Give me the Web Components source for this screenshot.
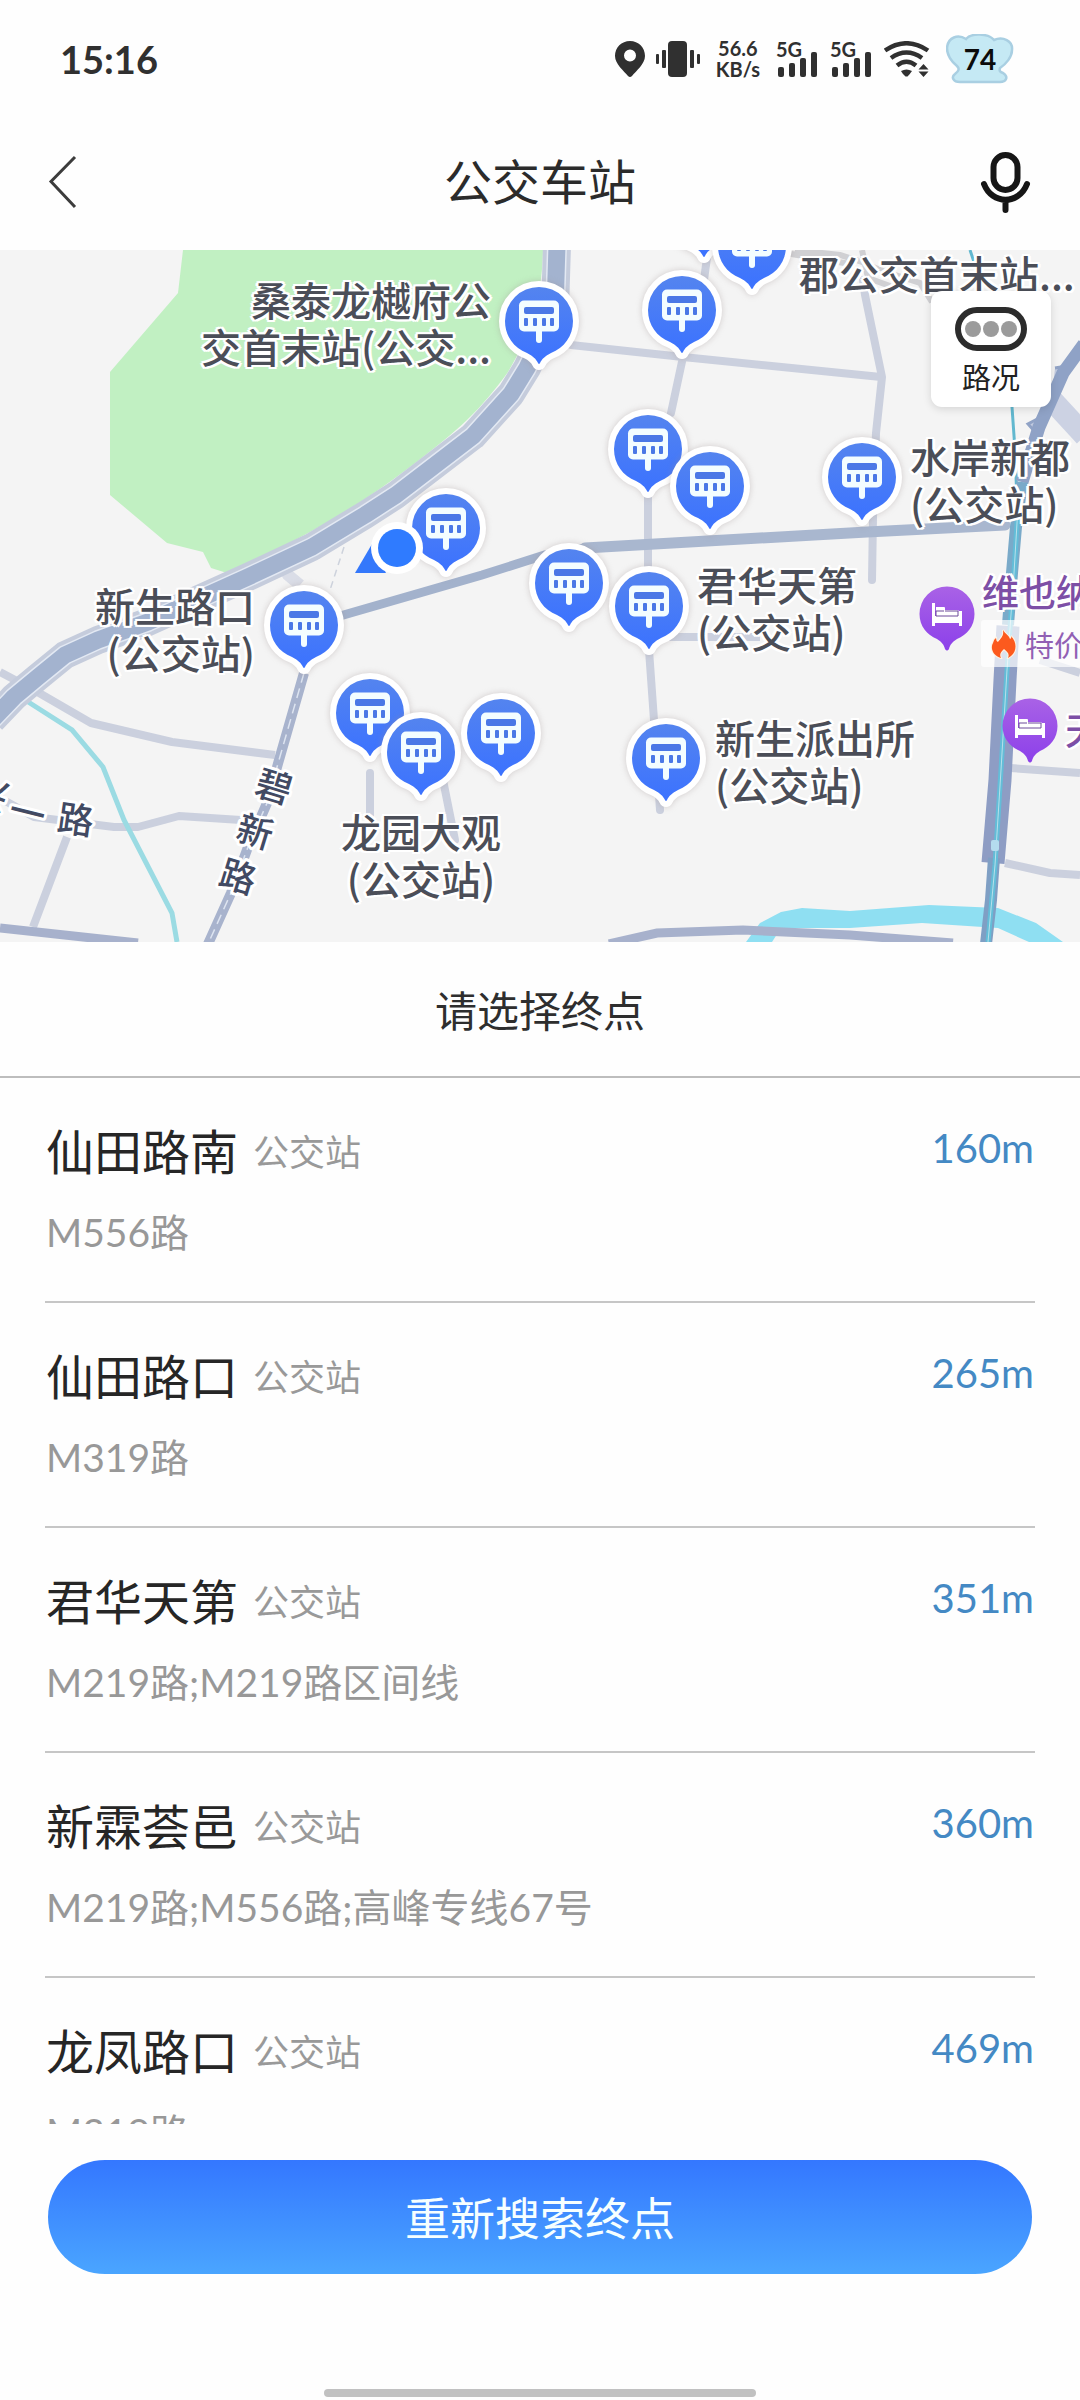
<!DOCTYPE html>
<html lang="zh-CN">
<head>
<meta charset="utf-8">
<meta name="viewport" content="width=device-width, initial-scale=1">
<title>公交车站</title>
<style>
body { margin: 0; background: #fefefe; color: #2b2b2b; font-family: Lato, "Noto Sans CJK SC", sans-serif; }
</style>
</head>
<body>
<station-page></station-page>

<script>
const define = (name, html, setup) => {
  const template = document.createElement('template');
  template.innerHTML = html.trim();
  customElements.define(name, class extends HTMLElement {
    constructor() {
      super();
      this.attachShadow({ mode: 'open' }).append(template.content.cloneNode(true));
    }
    connectedCallback() { if (setup) setup(this, this.shadowRoot); }
  });
};

/* Puts an element at its map coordinates */
const place = el => {
  el.style.left = el.getAttribute('x') + 'px';
  el.style.top = el.getAttribute('y') + 'px';
};

define('status-bar', `
<style>
:host { display: flex; align-items: center; justify-content: space-between; height: 117px; padding: 0 66px 0 60px; box-sizing: border-box; color: #303030; font-weight: 700; }
.time { font-size: 38px; line-height: 48px; }
.icons { display: flex; align-items: center; gap: 11px; }
svg { display: block; }
.rate { font-size: 20px; line-height: 21px; text-align: center; margin: 0 5px; }
.cell { position: relative; width: 43px; height: 36px; }
.cell span { position: absolute; left: 0; top: -2px; font-size: 20px; line-height: 20px; }
.cell svg { position: absolute; left: 0; top: 0; }
.battery { display: grid; place-items: center; margin-left: 5px; color: #0b0b0b; }
.battery > * { grid-area: 1 / 1; }
.battery span { font-size: 28px; line-height: 32px; }
</style>
<span class="time">15:16</span>
<div class="icons">
  <svg width="30" height="36" viewBox="0 0 30 36" fill="#303030"><path fill-rule="evenodd" d="M15 0C6.500 0 0 6.500 0 15c0 8 9 15 13 20q2 2 4 0c4-5 13-12 13-20C30 6.500 23.500 0 15 0Zm0 8.500a6 6 0 1 1 0 12 6 6 0 0 1 0-12Z"/></svg>
  <svg width="44" height="36" viewBox="0 0 44 36" fill="#303030"><rect x="12" width="19" height="36" rx="4"/><rect x="6" y="9" width="4" height="18" rx="1"/><rect y="13" width="3" height="10" rx="1"/><rect x="34" y="9" width="4" height="18" rx="1"/><rect x="41" y="13" width="3" height="10" rx="1"/></svg>
  <div class="rate">56.6<br>KB/s</div>
  <div class="cell"><span>5G</span><svg width="43" height="36" fill="#303030"><rect x="2" y="26" width="6" height="10" rx="2"/><rect x="13" y="22" width="6" height="14" rx="2"/><rect x="24" y="17" width="6" height="19" rx="2"/><rect x="35" y="11" width="6" height="25" rx="2"/></svg></div>
  <div class="cell"><span>5G</span><svg width="43" height="36" fill="#303030"><rect x="2" y="26" width="6" height="10" rx="2"/><rect x="13" y="22" width="6" height="14" rx="2"/><rect x="24" y="17" width="6" height="19" rx="2"/><rect x="35" y="11" width="6" height="25" rx="2"/></svg></div>
  <svg width="46" height="36" viewBox="0 0 46 36" fill="#303030"><g fill="none" stroke="#303030" stroke-width="4.500"><path d="M1 9.500Q22.500-5 44 9.500"/><path d="M7 17Q22.500 6 38 17"/><path d="M13 24.500Q22.500 17 32 24.500"/></g><path d="M17 30q5.500-3 11 0-2 3-4.500 5.500h-2Q18.500 33 17 30Z"/><path d="m39.500 23 5 5.500h-10ZM39.500 36l5-5.500h-10Z"/></svg>
  <div class="battery">
    <svg width="68" height="50" viewBox="0 0 68 50"><path d="M9 40C14 36 13 34 11 32 5 27 1 21 1 14 2 3 12 0 20 5 25-1 42-1 48 6 57 2 67 7 66 16 66 23 60 30 54 34 53 37 54 38 57 39 63 43 60 48 54 48H14C7 48 5 43 9 40Z" fill="#c5e9f4" stroke="#a9cfe2" stroke-width="2.500"/></svg>
    <span>74</span>
  </div>
</div>`);

define('title-bar', `
<style>
:host { display: flex; align-items: center; justify-content: space-between; height: 133px; padding: 0 48px 3px; box-sizing: border-box; }
h1 { margin: 0; font-size: 48px; line-height: 56px; font-weight: 400; }
button { padding: 0; border: 0; background: none; width: 54px; height: 64px; display: grid; place-items: center start; }
.mic { place-items: center end; }
svg { display: block; }
</style>
<button aria-label="返回"><svg width="30" height="54" viewBox="0 0 30 54" fill="none" stroke="#3c3c3c" stroke-width="3"><path d="M27 2 3 26.500 27 52"/></svg></button>
<h1><slot></slot></h1>
<button class="mic" aria-label="语音"><svg width="52" height="62" viewBox="0 0 52 62" fill="none" stroke="#161616" stroke-width="6" stroke-linecap="round"><rect x="13.500" y="4" width="24" height="35" rx="12"/><path d="M4 33C12 54 39 54 47 33M25.500 49v10"/></svg></button>`);

define('bus-pin', `
<style>
:host { position: absolute; width: 88px; height: 98px; margin: -44px 0 0 -44px; }
svg { display: block; filter: drop-shadow(0 0 3px #9a8f8f66); }
</style>
<svg width="88" height="98" viewBox="-44 -44 88 98">
  <defs><linearGradient id="g" x1="0" y1="0" x2="0" y2="1"><stop stop-color="#5484ef"/><stop offset="1" stop-color="#3b72ff"/></linearGradient></defs>
  <path d="M0-34A34 34 0 0 0-34 0C-34 15-25 27-12 32-6 35-3 38-1 42Q0 44 1 42C3 38 6 35 12 32 25 27 34 15 34 0A34 34 0 0 0 0-34Z" fill="url(#g)" stroke="#fff" stroke-width="12" stroke-linejoin="round" paint-order="stroke"/>
  <rect x="-20" y="-20.500" width="40" height="31" rx="5" fill="#f3fdff"/>
  <rect x="-3" y="6" width="6" height="16" rx="3" fill="#f3fdff"/>
  <g fill="#4a78e6"><rect x="-15" y="-14" width="30" height="7" rx="2"/><rect x="-15" y="-3" width="4" height="8" rx="1"/><rect x="-6" y="-3" width="4" height="8" rx="1"/><rect x="3" y="-3" width="4" height="8" rx="1"/><rect x="11" y="-3" width="4" height="8" rx="1"/></g>
</svg>`, place);

define('hotel-pin', `
<style>
:host { position: absolute; width: 56px; height: 66px; margin: -28px 0 0 -28px; }
svg { display: block; }
</style>
<svg width="56" height="66" viewBox="-28 -28 56 66">
  <defs><linearGradient id="g" x1="0" y1="0" x2="0" y2="1"><stop stop-color="#a962e6"/><stop offset="1" stop-color="#8c40ea"/></linearGradient></defs>
  <path d="M0-27.500A27.500 27.500 0 0 0-27.500 0C-27.500 12-20 21-10 25-5 28-3 31-2 35Q0 38 2 35C3 31 5 28 10 25 20 21 27.500 12 27.500 0A27.500 27.500 0 0 0 0-27.500Z" fill="url(#g)"/>
  <path d="M-15-11h3V2h24V-3h3v15h-3V9h-24v3h-3Z" fill="#fff"/><path d="M-11-7h8q1 0 1 1v2h12q2 0 2 2v4h-23Z" fill="#fff"/><path d="M-11-3h8M-11 2V-3M-2-3h13v5h-22" fill="none" stroke="#6c4a9a" stroke-width="1"/>
</svg>`, place);

/* x is the left, centre or right edge of the text, after the align attribute; y is its middle */
define('map-label', `
<style>
:host { position: absolute; transform: translateY(-50%); white-space: pre; font: 500 40px/47px "Noto Sans CJK SC", sans-serif; color: #4b4e58; text-shadow: 2px 0 #fff, -2px 0 #fff, 0 2px #fff, 0 -2px #fff, 2px 2px #fff, -2px -2px #fff, 2px -2px #fff, -2px 2px #fff, 3px 0 #fff, -3px 0 #fff; }
:host([align=right]) { transform: translate(-100%, -50%); text-align: right; }
:host([align=center]) { transform: translate(-50%, -50%); text-align: center; }
:host([kind=hotel]) { color: #7d4fa6; font-size: 37px; }
</style><slot></slot>`, place);

define('hot-tag', `
<style>
:host { position: absolute; display: flex; align-items: center; gap: 8px; height: 47px; padding: 0 10px; box-sizing: border-box; background: #ffffffb0; color: #9160b4; font: 400 29px/40px "Noto Sans CJK SC", sans-serif; white-space: nowrap; border-radius: 3px; }
svg { display: block; }
</style>
<svg width="26" height="30" viewBox="0 0 26 30"><path d="M12 1C14 5 18 6 19 10Q21 9 20 7C26 13 26 22 20 27L17 29C19 24 16 23 13 20 10 23 8 25 10 29 2 27-1 19 2 14Q3 10 5 9 5 12 7 13C10 9 13 7 12 1Z" fill="#fc5a1e" stroke="#fff3e2" stroke-width="2" paint-order="stroke"/></svg>
<slot></slot>`, place);

define('traffic-toggle', `
<style>
:host { position: absolute; right: 29px; top: 41px; }
button { display: flex; flex-direction: column; align-items: center; justify-content: center; gap: 8px; width: 120px; height: 116px; padding: 2px 0 0; border: 0; border-radius: 11px; background: #fff; color: #222; font: 400 29px/34px "Noto Sans CJK SC", sans-serif; box-shadow: 0 2px 8px #0002; }
svg { display: block; }
</style>
<button><svg width="72" height="44" viewBox="0 0 72 44"><rect x="3" y="3" width="66" height="38" rx="19" fill="#fff" stroke="#2c2c2c" stroke-width="6"/><g fill="#9b9b9b"><circle cx="18" cy="22" r="8"/><circle cx="36" cy="22" r="8"/><circle cx="54" cy="22" r="8"/></g></svg><slot></slot></button>`);

define('station-map', `
<style>
:host { display: block; position: relative; height: 692px; overflow: hidden; background: #f4f4f4; }
.base { position: absolute; inset: 0; width: 1080px; height: 692px; }
text { font: 500 36px "Noto Sans CJK SC", sans-serif; fill: #424a63; stroke: #fff; stroke-width: 6px; stroke-linejoin: round; paint-order: stroke; text-anchor: middle; dominant-baseline: central; }
.me { position: absolute; left: 350px; top: 268px; }
</style>
<svg class="base" viewBox="0 0 1080 692" fill="none">
  <path d="M183 0 178 43 110 122V245L167 293 203 302 211 318 227 323C300 290 350 262 406 220S480 160 508 122C530 85 542 50 543 0Z" fill="#c1f0c2"/>
  <g stroke="#cbd0de" stroke-width="8" stroke-linejoin="round">
    <path d="M571 95 683 107 881 127M863 30 865 45 882 127 876 183 873 267 872 330" stroke-linecap="round"/>
    <path d="M708 0 704 30 683 107 671 163M648 240V325M649 400 654 470 660 560" stroke-linecap="round"/>
    <path d="M660 387H760"/>
    <path d="M0 422 34 440 91 473 172 492 275 505M0 548 34 567 114 577H138L179 566 241 570M67 587 33 677"/>
    <path d="M370 523V575M443 530 455 590" stroke-linecap="round"/>
    <path d="M1010 518 1080 523M1005 613 1050 623 1080 625M1040 410 1080 423"/>
    <path d="M280 305 288 325 300 335" stroke-width="12" stroke="#dadde7"/>
  </g>
  <path d="M795 0 840 5 862 12 880 20 920 33 932 52M862 0 868 28 890 36M780 2 850 14" stroke="#d0d0d3" stroke-width="6"/>
  <path d="M344 297 330 340" stroke="#cdd2dc" stroke-width="1.500" stroke-dasharray="7 5"/>
  <path d="M22 448 72 480 103 517 124 570 172 663 177 692" stroke="#9bdbe3" stroke-width="5"/>
  <path d="M746 692 760 673 781 662 802 658 850 661 929 655 998 658 1036 673 1063 692H1029L998 678 922 673 850 678 781 678 772 692Z" fill="#8fdff2"/>
  <path d="M609 694 657 683 743 680 850 685 953 693M0 678 138 693" stroke="#a7b1cc" stroke-width="9"/>
  <path d="M304 423 279 510 267 553 248 597 231 643 208 694" stroke="#a8b3cd" stroke-width="10"/>
  <path d="M304 423 279 510 267 553 248 597 231 643 208 694" stroke="#dde4f0" stroke-width="1.500" stroke-dasharray="10 6"/>
  <path d="M340 366 482 325 545 305 585 298" stroke="#a3b2cc" stroke-width="9"/>
  <path d="M585 298 867 282 1005 275" stroke="#a9b7cf" stroke-width="11" stroke-linecap="round"/>
  <g stroke-linejoin="round">
    <path d="M557-5 555 60 527 118 511 144 473 186 396 245 365 265 312 297 248 327 148 372 98 390 65 405 38 427 14 447-8 470" stroke="#c5ccdc" stroke-width="28"/>
    <path d="M557-5 555 60 527 118 511 144 473 186 396 245 365 265 312 297 248 327 148 372 98 390 65 405 38 427 14 447-8 470" stroke="#e3e9f3" stroke-width="20"/>
    <path d="M557-5 555 60 527 118 511 144 473 186 396 245 365 265 312 297 248 327 148 372 98 390 65 405 38 427 14 447-8 470" stroke="#a3b3cf" stroke-width="17"/>
  </g>
  <path d="M1050 148 1085 186" stroke="#ccd2e3" stroke-width="22"/>
  <path d="M1055 118 1066 116 1064 128 1052 146M1043 166 1028 174 1037 184" stroke="#91a3c6" stroke-width="3" fill="#c2cbe0"/>
  <path d="M970 0 975 15M1012 157 1015 200 1018 277" stroke="#62b8cf" stroke-width="3"/>
  <path d="M1084 94 1063 123 1039 177 1022 232" stroke="#8fa2c6" stroke-width="13"/>
  <path d="M1022 232 1016 277 1012 323 1008 375" stroke="#7aaac9" stroke-width="12"/>
  <path d="M1008 376 1005 430 1000 530 993 613" stroke="#8e9dc4" stroke-width="23" stroke-linejoin="round"/>
  <path d="M994 608 991 650 986 694" stroke="#7f9fc4" stroke-width="12"/>
  <path d="M1019 240 1014 323 1007 420 1001 520 995 615 988 692" stroke="#63bdd8" stroke-width="5"/>
  <path d="M1019 240 1014 323 1007 420 1001 520 995 615 988 692" stroke="#b8e0ea" stroke-width="1"/>
  <rect x="991" y="590" width="8" height="11" rx="2" fill="#b4dbee"/>
  <text transform="translate(275 534) rotate(17)">碧</text>
  <text transform="translate(256 579) rotate(17)">新</text>
  <text transform="translate(239 624) rotate(17)">路</text>
  <text transform="translate(-9 541) rotate(20)">兴</text>
  <text transform="translate(28 560) rotate(14)">一</text>
  <text transform="translate(76 567) rotate(8)">路</text>
</svg>
<bus-pin x="704" y="-36"></bus-pin>
<bus-pin x="752" y="-4"></bus-pin>
<bus-pin x="539" y="71"></bus-pin>
<bus-pin x="682" y="60"></bus-pin>
<bus-pin x="648" y="199"></bus-pin>
<bus-pin x="710" y="236"></bus-pin>
<bus-pin x="862" y="227"></bus-pin>
<bus-pin x="446" y="278"></bus-pin>
<bus-pin x="304" y="375"></bus-pin>
<bus-pin x="569" y="333"></bus-pin>
<bus-pin x="649" y="356"></bus-pin>
<bus-pin x="370" y="463"></bus-pin>
<bus-pin x="421" y="502"></bus-pin>
<bus-pin x="501" y="483"></bus-pin>
<bus-pin x="666" y="508"></bus-pin>
<svg class="me" width="80" height="64" viewBox="0 0 80 64"><path d="M22 26 5 55H36Z" fill="#3478fb"/><circle cx="47" cy="30" r="26" fill="#fff"/><circle cx="47" cy="30" r="19" fill="#2f7bff"/></svg>
<map-label x="491" y="73" align="right">桑泰龙樾府公
交首末站(公交...</map-label>
<map-label x="799" y="23">郡公交首末站...</map-label>
<map-label x="910" y="230">水岸新都
(公交站)</map-label>
<map-label x="255" y="379" align="right">新生路口
(公交站)</map-label>
<map-label x="697" y="358">君华天第
(公交站)</map-label>
<map-label x="421" y="605" align="center">龙园大观
(公交站)</map-label>
<map-label x="715" y="511">新生派出所
(公交站)</map-label>
<hotel-pin x="947" y="364"></hotel-pin>
<hotel-pin x="1030" y="476"></hotel-pin>
<map-label x="982" y="341" kind="hotel">维也纳</map-label>
<map-label x="1065" y="479" kind="hotel">天</map-label>
<hot-tag x="981" y="370">特价</hot-tag>
<traffic-toggle>路况</traffic-toggle>`);

define('stop-row', `
<style>
:host { display: block; margin: 0 45px; padding: 42px 1px 39px; border-bottom: 2px solid #c6c6c6; }
.top { display: flex; align-items: center; gap: 15px; height: 64px; }
h2 { margin: 0; font-size: 48px; line-height: 64px; font-weight: 400; color: #262626; }
.type { font-size: 36px; line-height: 64px; color: #999; }
.dist { margin-left: auto; font-size: 40px; line-height: 56px; color: #4489c4; align-self: flex-start; }
p { margin: 18px 0 0; font-size: 39px; line-height: 60px; color: #989898; }
</style>
<div class="top"><h2><slot></slot></h2><span class="type">公交站</span><span class="dist"></span></div>
<p></p>`, (el, root) => {
  root.querySelector('.dist').textContent = el.getAttribute('distance');
  root.querySelector('p').textContent = el.getAttribute('lines');
});

define('action-footer', `
<style>
:host { display: flex; flex-direction: column; align-items: center; padding: 36px 48px 3px; }
button { width: 100%; height: 114px; padding: 4px 0 0; border: 0; border-radius: 57px; background: linear-gradient(#3477ff, #4aa5ff); color: #f6ffff; font: inherit; font-size: 45px; line-height: 60px; }
i { width: 432px; height: 8px; margin-top: 115px; border-radius: 4px; background: #c1c1c1; }
</style>
<button><slot></slot></button><i></i>`);

define('station-page', `
<style>
:host { display: flex; flex-direction: column; height: 100vh; }
.prompt { margin: 0; padding: 39px 0 35px; border-bottom: 2px solid #bdbdbd; text-align: center; font-size: 42px; line-height: 60px; font-weight: 400; color: #2e2e2e; }
.list { flex: 1; min-height: 0; overflow: hidden; }
</style>
<status-bar></status-bar>
<title-bar>公交车站</title-bar>
<station-map></station-map>
<h2 class="prompt">请选择终点</h2>
<div class="list">
  <stop-row distance="160m" lines="M556路">仙田路南</stop-row>
  <stop-row distance="265m" lines="M319路">仙田路口</stop-row>
  <stop-row distance="351m" lines="M219路;M219路区间线">君华天第</stop-row>
  <stop-row distance="360m" lines="M219路;M556路;高峰专线67号">新霖荟邑</stop-row>
  <stop-row distance="469m" lines="M319路">龙凤路口</stop-row>
</div>
<action-footer>重新搜索终点</action-footer>`);
</script>
</body>
</html>
